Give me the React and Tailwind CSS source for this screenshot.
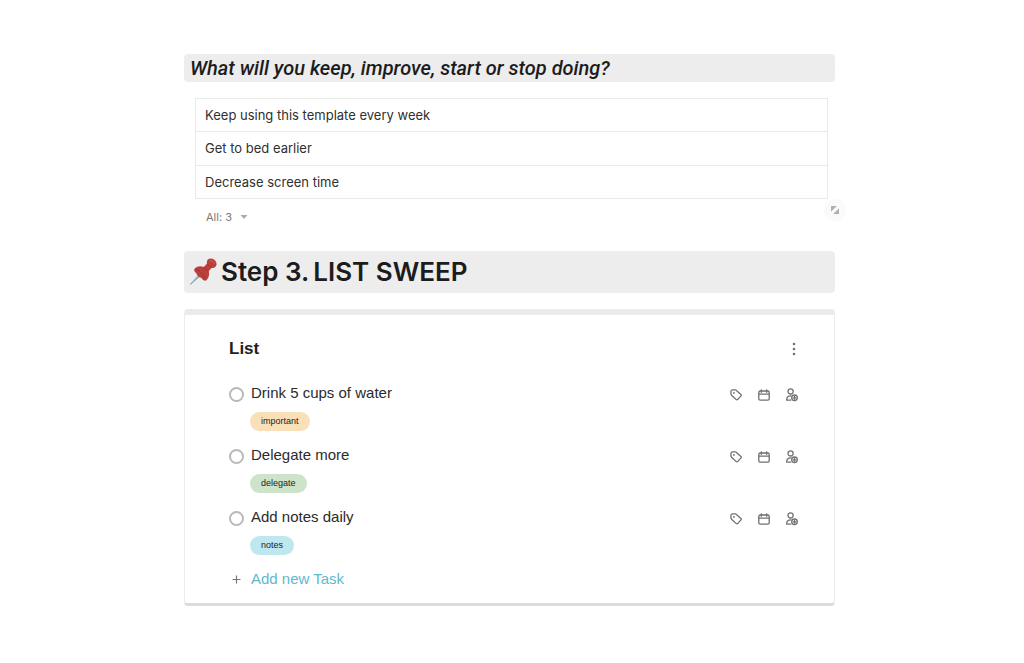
import { useState } from 'react';

const reflections = ['Keep using this template every week', 'Get to bed earlier', 'Decrease screen time'];

const tasks = [
  { id: 'water', title: 'Drink 5 cups of water', tag: 'important', tagClass: 'bg-[#fae0b8]' },
  { id: 'delegate', title: 'Delegate more', tag: 'delegate', tagClass: 'bg-[#cde4cb]' },
  { id: 'notes', title: 'Add notes daily', tag: 'notes', tagClass: 'bg-[#bfe7f0]' },
];

function TagIcon() {
  return (
    <svg className="size-3" viewBox="0 0 12 12" fill="none" stroke="currentColor" strokeWidth="1.3" strokeLinejoin="round">
      <path d="M0.9 2.6 Q0.9 1 2.4 0.9 L5.2 0.9 Q5.9 0.9 6.4 1.4 L10.9 5.5 Q11.6 6.2 11 6.9 L7.6 10.6 Q6.9 11.2 6.2 10.6 L1.6 6.3 Q1 5.7 1 5.1 Z" />
      <circle cx="3.9" cy="3.9" r="0.9" fill="currentColor" stroke="none" />
    </svg>
  );
}

function CalendarIcon() {
  return (
    <svg className="size-3" viewBox="0 0 12 12" fill="none" stroke="currentColor" strokeWidth="1.3" strokeLinecap="round">
      <rect x="0.8" y="2" width="10.4" height="9.2" rx="1.4" />
      <path d="M1 5.2H11M3.3 0.8V3.3M8.7 0.8V3.3" />
    </svg>
  );
}

function AssignIcon() {
  return (
    <svg className="h-3.5 w-3" viewBox="0 0 12 14" fill="none" stroke="currentColor" strokeWidth="1.3" strokeLinecap="round">
      <circle cx="4.6" cy="3.4" r="2.6" />
      <path d="M4.8 12.1H0.8C0.3 9.2 2 8 5 7.9" />
      <circle cx="8.5" cy="9.8" r="2.8" strokeWidth="1.3" />
      <path d="M8.5 8.4V11.2M7.1 9.8H9.9" strokeWidth="1.3" />
    </svg>
  );
}

function PinIcon() {
  return (
    <svg className="h-7 w-7 shrink-0" viewBox="0 0 28 28" aria-hidden="true">
      <path d="M1 26.3 L10.5 15.5 L12.4 17.3 L1.6 26.8 Z" fill="#6f98a3" />
      <path d="M3 24.4 L10.8 16.6" stroke="#c7dde2" strokeWidth="0.8" />
      <path d="M5.2 11.2 C7 8.2 11.5 7.6 14.6 8.9 L18 5.8 C17.2 2.8 19.2 0.4 22.1 0.6 C25.6 0.8 28.2 4.3 27.4 7.3 C26.7 9.4 24.6 10.3 22.7 9.7 L19.7 13.3 C20.9 17 19.4 21.2 16.3 22.8 C14.7 22.8 13.6 21.7 12.4 20 C9.6 19 8 17.7 7.5 15.4 C5.9 14.1 4.9 12.8 5.2 11.2 Z" fill="#bd3f3b" />
      <path d="M14.8 9.3 C15.7 11.4 17.2 12.7 19.3 13.3 M18.6 5.8 C19.3 7.7 20.7 8.9 22.7 9.3" fill="none" stroke="#963331" strokeWidth="0.7" />
      <path d="M6.3 11.3 C9.3 11.5 14.7 16.5 16 21.5" fill="none" stroke="#943634" strokeWidth="0.8" />
      <path d="M21.3 2.8 C22.9 2.5 24.7 3.6 25.3 5.2" fill="none" stroke="#d76861" strokeWidth="0.9" strokeLinecap="round" />
    </svg>
  );
}

function Task({ task }) {
  const [done, setDone] = useState(false);
  return (
    <li className="flex h-[62px] items-start">
      <input
        id={task.id}
        type="checkbox"
        checked={done}
        onChange={() => setDone(!done)}
        className="mt-1 size-[15px] shrink-0 appearance-none rounded-full border-2 border-[#b9b9b9] bg-white checked:bg-[#b9b9b9]"
      />
      <div className="ml-1.5 flex grow flex-col items-start">
        <label htmlFor={task.id} className="ml-px text-[15px] leading-5 text-[#2b2b2b]">{task.title}</label>
        <span className={`mt-[9px] rounded-full px-[11px] text-[9px] leading-[19px] text-[#222222] ${task.tagClass}`}>{task.tag}</span>
      </div>
      <div className="flex h-6 items-center gap-4 text-[#707070]">
        <button type="button" aria-label={`Tag ${task.title}`}><TagIcon /></button>
        <button type="button" aria-label={`Schedule ${task.title}`}><CalendarIcon /></button>
        <button type="button" aria-label={`Assign ${task.title}`}><AssignIcon /></button>
      </div>
    </li>
  );
}

export default function App() {
  return (
    <main className="min-h-screen bg-white pt-[54px] pr-[189px] pb-14 pl-[184px] font-['Inter',sans-serif]">
      <h2 className="rounded bg-[#ededed] px-1.5 font-['Roboto',sans-serif] text-[20px] leading-7 font-medium text-[#1c1c1c] italic">
        What will you keep, improve, start or stop doing?
      </h2>

      <section className="relative mt-4 mr-[7px] ml-[11px]">
        <table className="h-[101px] w-full border-collapse text-left text-[13px] leading-5 text-[#303030]">
          <tbody>
            {reflections.map((text) => (
              <tr key={text}>
                <td className="border border-[#e9e9e9] px-[9px]">{text}</td>
              </tr>
            ))}
          </tbody>
        </table>
        <button type="button" className="mt-2 ml-[11px] flex items-center gap-2 text-[11px] leading-5 text-[#787878]">
          All: 3
          <svg className="h-1 w-2" viewBox="0 0 8 4" aria-hidden="true"><path d="M0.5 0H7.5L4 4Z" fill="#aaaaaa" /></svg>
        </button>
        <button type="button" aria-label="Resize table" className="absolute -right-[18px] bottom-1.5 flex size-[22px] items-center justify-center rounded-full bg-[#fafafa]">
          <svg className="size-2" viewBox="0 0 8 8" fill="#b0b0b0"><path d="M0 0H5.8L0 5.8ZM8 2.2V8H2.2Z" /></svg>
        </button>
      </section>

      <h1 className="mt-6 flex h-[42px] items-center gap-1 rounded bg-[#ededed] px-[5px] text-[26px] leading-8 font-semibold text-[#1c1c1c]">
        <PinIcon />
        <span>Step 3.</span>
        <span>LIST SWEEP</span>
      </h1>

      <section className="mt-4 rounded border-x border-t-6 border-b-3 border-x-[#ececec] border-t-[#ebebeb] border-b-[#dcdcdc] bg-white pt-6 pr-9 pb-[14px] pl-11 font-['Liberation_Sans',sans-serif]">
        <div className="mr-px flex items-center justify-between">
          <h3 className="text-[17px] leading-5 font-bold text-[#1f1f1f]">List</h3>
          <button type="button" aria-label="List options" className="text-[#707070]">
            <svg className="h-3.5 w-1.5" viewBox="0 0 6 14" fill="currentColor"><circle cx="3" cy="2" r="1.3" /><circle cx="3" cy="7" r="1.3" /><circle cx="3" cy="12" r="1.3" /></svg>
          </button>
        </div>
        <ul className="mt-6">
          {tasks.map((task) => <Task key={task.id} task={task} />)}
        </ul>
        <button type="button" className="flex items-center gap-2.5 text-[15px] leading-5 text-[#60b9cd]">
          <svg className="ml-[3px] size-[9px]" viewBox="0 0 9 9" aria-hidden="true"><path d="M4.5 0.5V8.5M0.5 4.5H8.5" stroke="#777777" strokeWidth="1.2" /></svg>
          Add new Task
        </button>
      </section>
    </main>
  );
}
